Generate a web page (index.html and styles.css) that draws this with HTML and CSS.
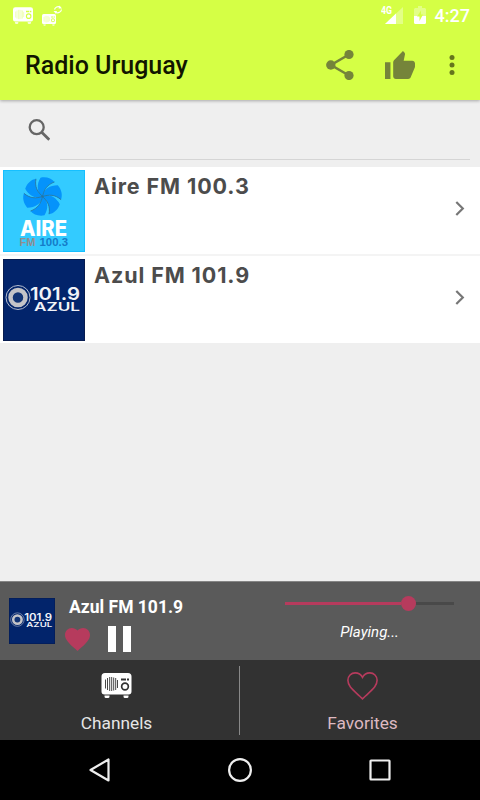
FILE: index.html
```html
<!DOCTYPE html>
<html lang="en">
<head>
    <meta charset="UTF-8">
    <meta name="viewport" content="width=device-width, initial-scale=1.0">
    <title>Radio Uruguay</title>
    <link rel="stylesheet" href="styles.css">
</head>
<body>
    <svg class="defs" width="0" height="0">
        <symbol id="radio" viewBox="0 0 30 25">
            <path fill-rule="evenodd" d="M3.500 0h23a3.500 3.500 0 0 1 3.500 3.500v15a3 3 0 0 1-3 3H3a3 3 0 0 1-3-3v-15A3.500 3.500 0 0 1 3.500 0zM19.500 5.500v2h5v-2zM25.500 5.500v2h2v-2zM23.500 9.300a4.200 4.200 0 1 0 0 8.400a4.200 4.200 0 1 0 0-8.400zM23.500 11a2.500 2.500 0 1 1 0 5a2.500 2.500 0 1 1 0-5z"/>
            <path d="M3 22.500h5v1a1.500 1.500 0 0 1-1.500 1.500h-2A1.500 1.500 0 0 1 3 23.500zM22 22.500h5v1a1.500 1.500 0 0 1-1.500 1.500h-2a1.500 1.500 0 0 1-1.500-1.500z"/>
            <path class="grille" d="M4 6.500v9M6 5v12M8.200 4v14M10.200 4v14M12.200 4.500v13M14.200 5v12M16 7v8"/>
        </symbol>
        <symbol id="azul" viewBox="0 0 82 82">
            <rect width="82" height="82" fill="#02246b"/>
            <rect x=".5" y=".5" width="81" height="81" fill="none" stroke="#071c50"/>
            <circle cx="15" cy="38.500" r="12" fill="none" stroke="#b5bdcf"/>
            <circle cx="15" cy="38.500" r="7.500" fill="#123475" stroke="#c4c4c8" stroke-width="4.500"/>
            <g fill="#f1f3f8" font-family="Inter, sans-serif" font-weight="600">
                <text x="27" y="41" font-size="17.500" textLength="50" lengthAdjust="spacingAndGlyphs">101.9</text>
                <text x="31" y="52" font-size="11.800" textLength="46" lengthAdjust="spacingAndGlyphs">AZUL</text>
            </g>
        </symbol>
    </svg>

    <div class="app">
        <header class="header">
            <div class="status">
                <svg class="status-radio" width="20" height="17"><use href="#radio"/></svg>
                <svg class="status-sync" width="21" height="21" viewBox="0 0 21 21">
                    <use href="#radio" x="0" y="9" width="14" height="11.700"/>
                    <path d="M12.500 4.500a4 4 0 0 1 5.500-2.500M19.500 4.500a4 4 0 0 1-5.500 3" fill="none" stroke="#fff" stroke-width="1.200"/>
                    <path d="M17.500 .5l2.500 3h-3.500zM14 9l-2.500-3h3.500z"/>
                </svg>
                <svg class="signal" width="23" height="19" viewBox="0 0 23 19">
                    <path d="M22 1v17H4z" opacity=".35"/>
                    <path d="M15 7.600V18H4z"/>
                    <path d="M0 0h12v9H0z" fill="#d5ff45"/>
                    <text x="0" y="8" font-size="10" font-weight="700" textLength="11" lengthAdjust="spacingAndGlyphs">4G</text>
                </svg>
                <svg class="battery" width="12" height="18" viewBox="0 0 12 18">
                    <path d="M1 2h3V0h4v2h3l1 1v14l-1 1H1l-1-1V3z" opacity=".35"/>
                    <path d="M0 10h12v7l-1 1H1l-1-1z"/>
                    <path d="M7 4.500L3 10.500h2.500V15L9 8.500H7z" fill="#d5ff45"/>
                </svg>
                <span class="clock">4:27</span>
            </div>
            <div class="toolbar">
                <h1>Radio Uruguay</h1>
                <svg class="share" width="28" height="30" viewBox="0 0 28 30">
                    <path d="M23 4.500L5 15l18 10.500" fill="none" stroke="#75843a" stroke-width="2.600"/>
                    <circle cx="23" cy="4.500" r="4.600"/>
                    <circle cx="4.800" cy="15" r="4.700"/>
                    <circle cx="23" cy="25.500" r="4.600"/>
                </svg>
                <svg class="like" width="30" height="28" viewBox="1 1 22 20" preserveAspectRatio="none">
                    <path d="M1 21h4V9H1v12zm22-11c0-1.100-.9-2-2-2h-6.310l.95-4.570.03-.32c0-.41-.17-.79-.44-1.060L14.170 1 7.590 7.590C7.220 7.950 7 8.450 7 9v10c0 1.100.9 2 2 2h9c.83 0 1.540-.5 1.840-1.220l3.020-7.050c.09-.23.14-.47.14-.73v-2z"/>
                </svg>
                <svg class="more" width="6" height="22" viewBox="0 0 6 22">
                    <circle cx="3" cy="3.500" r="2.500"/>
                    <circle cx="3" cy="11" r="2.500"/>
                    <circle cx="3" cy="18.500" r="2.500"/>
                </svg>
            </div>
        </header>

        <div class="search">
            <svg width="22" height="22" viewBox="0 0 22 22" fill="none" stroke="#666" stroke-width="2.300">
                <circle cx="8.700" cy="8.200" r="7"/>
                <path d="M13.700 13.200l7.600 7.600" stroke-width="2.800"/>
            </svg>
            <div class="search-field"></div>
        </div>

        <main class="list">
            <div class="row">
                <svg width="82" height="82" viewBox="0 0 82 82">
                    <rect width="82" height="82" fill="#33cbff"/>
                    <rect x=".5" y=".5" width="81" height="81" fill="none" stroke="#16bfff"/>
                    <g transform="translate(39.500 26.500)">
                        <g fill="#0593fb">
                            <path id="blade" d="M0 1C-6-5-6-12-2-18.800C4-20 9-18 12-14.500C5-12 1-7 0 1z"/>
                            <use href="#blade" transform="rotate(60)"/>
                            <use href="#blade" transform="rotate(120)"/>
                            <use href="#blade" transform="rotate(180)"/>
                            <use href="#blade" transform="rotate(240)"/>
                            <use href="#blade" transform="rotate(300)"/>
                        </g>
                        <g fill="none" stroke="#28769f" stroke-width=".8">
                            <path id="edge" d="M12-14.500C5-12 1-7 0 1"/>
                            <use href="#edge" transform="rotate(60)"/>
                            <use href="#edge" transform="rotate(120)"/>
                            <use href="#edge" transform="rotate(180)"/>
                            <use href="#edge" transform="rotate(240)"/>
                            <use href="#edge" transform="rotate(300)"/>
                        </g>
                    </g>
                    <text x="17" y="65.500" font-family="Inter, sans-serif" font-weight="800" font-size="21" fill="#fff" textLength="47" lengthAdjust="spacingAndGlyphs">AIRE</text>
                    <g font-family="Liberation Sans, sans-serif" font-weight="700" font-size="11">
                        <text x="16.500" y="76" fill="#908f91" textLength="16" lengthAdjust="spacingAndGlyphs">FM</text>
                        <text x="36.500" y="76" fill="#157cc8" textLength="28.500" lengthAdjust="spacingAndGlyphs">100.3</text>
                    </g>
                </svg>
                <h2>Aire FM 100.3</h2>
                <svg class="chevron" width="10" height="15" viewBox="0 0 10 15"><path d="M1.300 1l6.500 6.500L1.300 14"/></svg>
            </div>
            <div class="row">
                <svg width="82" height="82"><use href="#azul"/></svg>
                <h2>Azul FM 101.9</h2>
                <svg class="chevron" width="10" height="15" viewBox="0 0 10 15"><path d="M1.300 1l6.500 6.500L1.300 14"/></svg>
            </div>
        </main>

        <section class="player">
            <svg class="cover" width="46" height="46"><use href="#azul"/></svg>
            <div class="track">
                <div class="track-name">Azul FM 101.9</div>
                <div class="controls">
                    <svg width="25" height="23" viewBox="2 3 20 18.350" preserveAspectRatio="none" fill="#b63b5d">
                        <path d="M12 21.350l-1.450-1.320C5.400 15.360 2 12.280 2 8.500 2 5.420 4.420 3 7.500 3c1.740 0 3.410.81 4.500 2.090C13.090 3.810 14.760 3 16.500 3 19.580 3 22 5.420 22 8.500c0 3.780-3.400 6.860-8.550 11.540L12 21.350z"/>
                    </svg>
                    <svg width="23" height="26" viewBox="0 0 23 26" fill="#fff"><path d="M0 0h8v26H0zM15 0h8v26h-8z"/></svg>
                </div>
            </div>
            <div class="volume">
                <div class="slider"><div class="slider-fill"></div><div class="slider-thumb"></div><div class="slider-rest"></div></div>
                <div class="state">Playing...</div>
            </div>
        </section>

        <nav class="tabs">
            <div class="tab">
                <svg class="tab-radio" width="31" height="25"><use href="#radio"/></svg>
                <span>Channels</span>
            </div>
            <div class="tab favorites">
                <svg width="31" height="28" viewBox="0 0 31 28" fill="none" stroke="#b63b5d" stroke-width="1.600">
                    <path d="M15.500 26.800L12.500 24C5 17 .9 13.700.9 8.300C.9 4 4.100.9 8.200.9C11.300.9 14 2.500 15.500 5.300C17 2.500 19.700.9 22.800.9C26.900.9 30.100 4 30.100 8.300C30.100 13.700 26 17 18.500 24z"/>
                </svg>
                <span>Favorites</span>
            </div>
        </nav>

        <footer class="sysnav">
            <svg width="24" height="26" viewBox="0 0 24 26"><path d="M20.500 2.500v21L2.500 13z"/></svg>
            <svg width="26" height="26" viewBox="0 0 26 26"><circle cx="13" cy="13" r="10.900"/></svg>
            <svg width="24" height="26" viewBox="0 0 24 26"><rect x="2.500" y="3.500" width="19" height="19" rx=".5"/></svg>
        </footer>
    </div>
</body>
</html>
```
FILE: styles.css
```css
* {
    box-sizing: border-box;
}
body {
    margin: 0;
    font-family: Roboto, sans-serif;
    background-color: #efefef;
}
svg {
    display: block;
    flex: none;
}
h1, h2 {
    margin: 0;
}
.defs {
    position: absolute;
}
.app {
    display: flex;
    flex-direction: column;
    width: 480px;
    height: 800px;
    overflow: hidden;
}
.header {
    height: 100px;
    background-color: #d5ff45;
    box-shadow: 0 1px 3px rgba(0, 0, 0, 0.3);
}
.status {
    display: flex;
    align-items: flex-start;
    height: 30px;
    padding: 5px 10px 0 13px;
    color: #fff;
    fill: #fff;
    --grille: #e6ff90;
}
.status-radio {
    margin-top: 2px;
}
.status-sync {
    margin-left: 9px;
}
.signal {
    margin: 1px 0 0 auto;
}
.battery {
    margin: 1px 9px 0 10px;
}
.clock {
    font-size: 18px;
    font-weight: 500;
    line-height: 22px;
}
.grille {
    fill: none;
    stroke: var(--grille, #333);
    stroke-width: 0.9;
}
.toolbar {
    display: flex;
    align-items: center;
    height: 70px;
    padding: 0 25px;
    fill: #75843a;
}
.toolbar h1 {
    flex: 1;
    font-size: 25px;
    font-weight: 500;
    color: #111600;
}
.like {
    margin: 0 34px 0 31px;
}
.more {
    fill: #65761d;
}
.search {
    display: flex;
    height: 67px;
    padding: 19px 10px 7px 28px;
}
.search-field {
    flex: 1;
    margin-left: 10px;
    border-bottom: 1px solid #d5d5d5;
}
.list {
    flex: 1;
}
.row {
    display: flex;
    align-items: center;
    height: 87px;
    padding: 0 15px 0 3px;
    background-color: #fff;
}
.row + .row {
    height: 89px;
    border-top: 2px solid #f4f4f4;
}
.row h2 {
    flex: 1;
    align-self: flex-start;
    margin: 6px 0 0 9px;
    font-family: Inter, sans-serif;
    font-size: 21.5px;
    font-weight: 700;
    line-height: 26px;
    letter-spacing: 0.9px;
    color: #4c4c4c;
}
.chevron {
    margin-bottom: 5px;
    fill: none;
    stroke: #777;
    stroke-width: 2.2;
}
.player {
    display: flex;
    height: 79px;
    padding: 0 26px 0 9px;
    border-top: 1px solid #858585;
    background-color: #5a5a5a;
    color: #fff;
}
.cover {
    margin-top: 16px;
}
.track {
    flex: 1;
    padding: 14px 0 0 10px;
}
.track-name {
    padding-left: 4px;
    font-size: 17.5px;
    font-weight: 700;
    line-height: 22px;
}
.controls {
    display: flex;
    align-items: center;
    gap: 18px;
    padding-top: 8px;
}
.volume {
    width: 169px;
    padding-top: 14px;
}
.slider {
    display: flex;
    align-items: center;
}
.slider-fill {
    width: 116px;
    height: 3px;
    background-color: #b63b5d;
}
.slider-thumb {
    width: 15px;
    height: 15px;
    border-radius: 50%;
    background-color: #b63b5d;
}
.slider-rest {
    flex: 1;
    height: 3px;
    background-color: #494949;
}
.state {
    margin-top: 11px;
    font-size: 15px;
    font-style: italic;
    line-height: 20px;
    text-align: center;
}
.tabs {
    display: flex;
    height: 80px;
    background-color: #323232;
}
.tab {
    display: flex;
    flex-direction: column;
    align-items: center;
    justify-content: space-between;
    width: 240px;
    margin: 6px 0 5px;
    padding: 6px 6px 0 0;
    border-right: 1px solid #888;
    font-size: 17.3px;
    line-height: 23px;
    color: #e6e6e6;
    fill: #fff;
}
.tab-radio {
    margin-top: 1px;
}
.favorites {
    padding-right: 0;
    padding-left: 5px;
    border-right: 0;
    color: #deb9c1;
}
.sysnav {
    display: flex;
    justify-content: space-between;
    align-items: center;
    height: 60px;
    padding: 0 88px;
    background-color: #000;
    fill: none;
    stroke: #eee;
    stroke-width: 2.2;
    stroke-linejoin: round;
}
```
